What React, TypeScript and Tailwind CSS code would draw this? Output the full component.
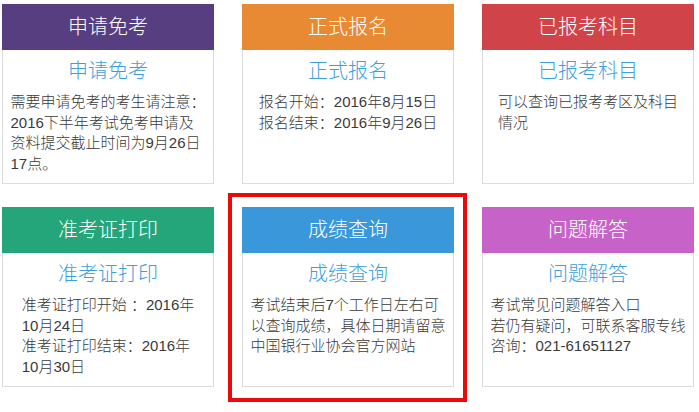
import React from "react";

type Card = {
  title: string;
  color: string;
  lines: string[];
  active?: boolean;
};

const cards: Card[] = [
  {
    title: "申请免考",
    color: "bg-[#573e80]",
    lines: ["需要申请免考的考生请注意：", "2016下半年考试免考申请及", "资料提交截止时间为9月26日", "17点。"],
  },
  {
    title: "正式报名",
    color: "bg-[#e88a33]",
    lines: ["报名开始：2016年8月15日", "报名结束：2016年9月26日"],
  },
  {
    title: "已报考科目",
    color: "bg-[#d04449]",
    lines: ["可以查询已报考考区及科目", "情况"],
  },
  {
    title: "准考证打印",
    color: "bg-[#24a57a]",
    lines: ["准考证打印开始 ：2016年", "10月24日", "准考证打印结束：2016年", "10月30日"],
  },
  {
    title: "成绩查询",
    color: "bg-[#3a97da]",
    lines: ["考试结束后7个工作日左右可", "以查询成绩，具体日期请留意", "中国银行业协会官方网站"],
    active: true,
  },
  {
    title: "问题解答",
    color: "bg-[#c763c8]",
    lines: ["考试常见问题解答入口", "若仍有疑问，可联系客服专线", "咨询：021-61651127"],
  },
];

export default function App() {
  return (
    <div
      className="w-[699px] h-[412px] bg-white overflow-hidden pt-[4px] pl-[2px]"
      style={{ fontFamily: '"Liberation Sans", "Noto Sans CJK SC", sans-serif' }}
    >
      <div className="grid grid-cols-[212px_212px_212px] gap-x-[28px] gap-y-[23px]">
        {cards.map((c) => (
          <div key={c.title} className="relative h-[180px] flex flex-col">
            <div
              className={`${c.color} h-[46px] flex items-center justify-center text-white text-[20px] leading-none font-light`}
            >
              {c.title}
            </div>
            <div className="flex-1 border-x border-b border-[#dcdcdc] bg-white">
              <div className="mt-[11px] text-center text-[20px] leading-[20px] text-[#3d9fe0] font-light">
                {c.title}
              </div>
              <div className="mt-[11px] w-fit mx-auto text-left text-[15px] leading-[20.5px] text-[#3a3a3a] font-light">
                {c.lines.map((l) => (
                  <div key={l} className="whitespace-pre">
                    {l}
                  </div>
                ))}
              </div>
            </div>
            {c.active && (
              <div className="absolute -left-[14px] -top-[14px] -right-[13px] -bottom-[15px] border-4 border-[#ea0a0a] pointer-events-none" />
            )}
          </div>
        ))}
      </div>
    </div>
  );
}
